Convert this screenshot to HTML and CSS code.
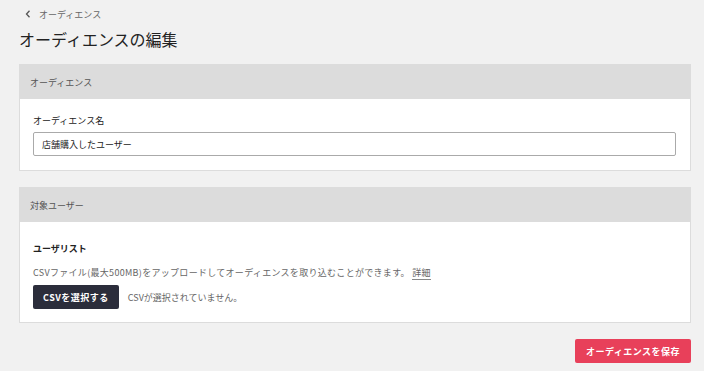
FILE: index.html
```html
<!DOCTYPE html>
<html lang="ja">
<head>
<meta charset="utf-8">
<link rel="stylesheet" href="styles.css">
</head>
<body>
<div class="page">
  <nav class="crumb">
    <svg class="chev" width="6" height="8" viewBox="0 0 6 8"><path d="M4.5 0.8 L1.5 4 L4.5 7.2" fill="none" stroke="#555" stroke-width="1.3"/></svg>
    <span>オーディエンス</span>
  </nav>
  <h1 class="title">オーディエンスの編集</h1>

  <section class="card">
    <div class="card-head">オーディエンス</div>
    <div class="card-body">
      <div class="label">オーディエンス名</div>
      <div class="input">店舗購入したユーザー</div>
    </div>
  </section>

  <section class="card">
    <div class="card-head">対象ユーザー</div>
    <div class="card-body body2">
      <div class="label bold">ユーザリスト</div>
      <p class="desc">CSVファイル(最大500MB)をアップロードしてオーディエンスを取り込むことができます。 <span class="link">詳細</span></p>
      <div class="file-row">
        <button class="btn dark">CSVを選択する</button>
        <span class="none">CSVが選択されていません。</span>
      </div>
    </div>
  </section>

  <div class="actions">
    <button class="btn red">オーディエンスを保存</button>
  </div>
</div>
</body>
</html>
```
FILE: styles.css
```css
html, body { margin: 0; padding: 0; }
body {
  background: #f1f1f1;
  font-family: "Noto Sans CJK JP", "Noto Sans", sans-serif;
  color: #222;
  width: 704px;
  height: 371px;
  overflow: hidden;
}
.page { padding: 0 13px 0 19px; }
.crumb {
  display: flex;
  align-items: center;
  gap: 8px;
  height: 28px;
  padding-left: 6px;
  font-size: 9px;
  color: #666;
}
.title {
  margin: 0;
  font-size: 16px;
  font-weight: 400;
  line-height: 22px;
  color: #222;
  height: 36px;
}
.card {
  background: #fff;
  border: 1px solid #dcdcdc;
  margin-bottom: 16px;
}
.card-head {
  background: #dcdcdc;
  height: 34px;
  display: flex;
  align-items: center;
  padding-left: 10px;
  font-size: 9px;
  color: #555;
}
.card-body { padding: 15px 14px 14px 13px; }
.label { font-size: 9px; line-height: 14px; color: #222; margin-bottom: 4px; }
.bold { font-weight: 700; }
.input {
  height: 22px;
  border: 1px solid #aaa;
  border-radius: 2px;
  display: flex;
  align-items: center;
  padding-left: 8px;
  font-size: 9px;
  color: #222;
}
.body2 { padding-top: 20px; padding-bottom: 13px; }
.desc { margin: 10px 0 5px; font-size: 9px; line-height: 14px; color: #666; letter-spacing: 0.3px; }
.link { border-bottom: 1px solid #888; }
.file-row { display: flex; align-items: center; gap: 9px; }
.btn {
  font-family: inherit;
  border: none;
  border-radius: 2px;
  height: 24px;
  color: #fff;
  font-size: 9px;
  font-weight: 700;
  letter-spacing: 0.5px;
  padding: 0 10px;
}
.dark { background: #2b2d3b; }
.none { font-size: 9px; color: #666; }
.actions { display: flex; justify-content: flex-end; margin-top: 1px; }
.red { background: #e8405a; width: 116px; }
```
